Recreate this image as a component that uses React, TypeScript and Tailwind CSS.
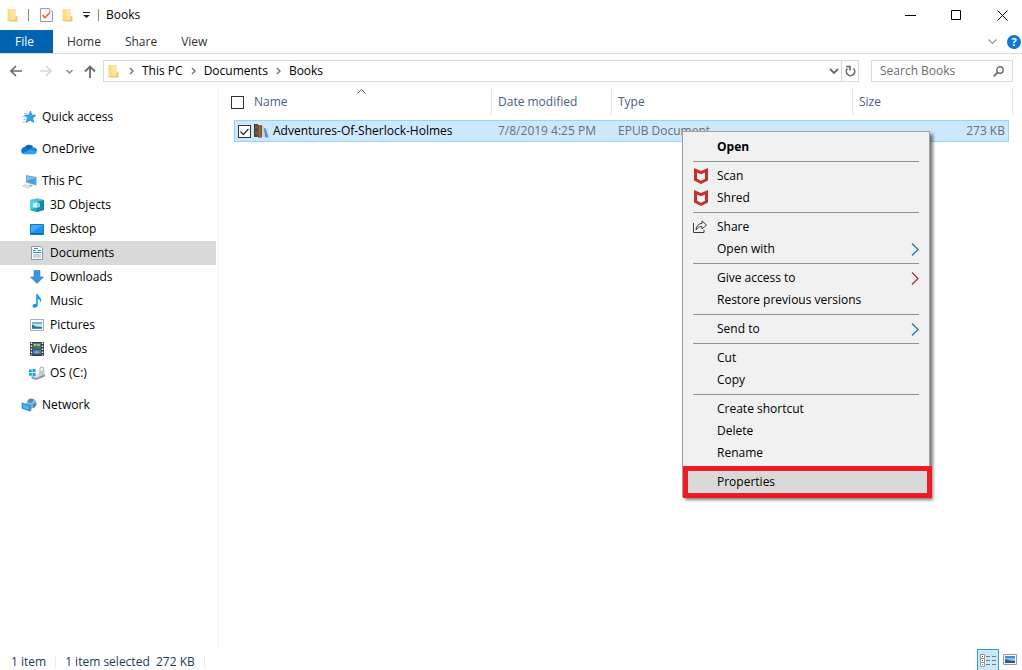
import type { ReactNode } from "react";

interface NavItem {
  label: string;
  icon: ReactNode;
  child?: boolean;
  active?: boolean;
}

interface MenuItem {
  label: string;
  icon?: ReactNode;
  bold?: boolean;
  submenu?: boolean;
  marked?: boolean;
}

/* ---------- icons ---------- */

function FolderIcon() {
  return (
    <svg width="11" height="14" viewBox="0 0 11 14" className="shrink-0">
      <path d="M6 8h4.500v5.500H3z" fill="#f3cd6b" />
      <path d="M.5 1h8v8.500L7 13H.5z" fill="#f9dc85" />
      <path d="M2.500 1h6v8.500L7 13H5z" fill="#fce49a" />
      <path d="M.5 12.200h10v1H.5z" fill="#f0c860" />
    </svg>
  );
}

function PropertiesIcon() {
  return (
    <svg width="13" height="16" viewBox="0 0 13 16">
      <path d="M.5 1.500h9l3 3v10H.5z" fill="#f4f7fa" stroke="#9aa0a6" />
      <path d="M9.500 1.500v3h3" fill="#fff" stroke="#b4b9be" />
      <path d="M2.500 8l2.500 2.500L10 5.500" fill="none" stroke="#ee6a35" strokeWidth="1.700" />
    </svg>
  );
}

function Chevron({ d, w, h, color, stroke = 1 }: { d: string; w: number; h: number; color: string; stroke?: number }) {
  return (
    <svg width={w} height={h} viewBox={`0 0 ${w} ${h}`} className="shrink-0">
      <path d={d} fill="none" stroke={color} strokeWidth={stroke} />
    </svg>
  );
}

const CrumbArrow = () => <Chevron d="M1 1l3 3-3 3" w={5} h={8} color="#7a7a7a" stroke={1.5} />;

function StarIcon() {
  return (
    <svg width="16" height="16" viewBox="0 0 16 16">
      <path d="M9.500 2l1.300 4 4.200.3-3.400 2.900 1.300 4.300-3.900-2.300-4 2.300 1.500-4.400L3.500 6.300l4.400-.3z" fill="#33a3ea" stroke="#1c7fc8" strokeWidth=".6" />
      <path d="M3 4.500h3.500M1.500 7.500h4M2.500 10.500h3M1.500 13h3" stroke="#8ecbf2" strokeWidth="1" />
    </svg>
  );
}

function OneDriveIcon() {
  return (
    <svg width="16" height="16" viewBox="0 0 16 16">
      <path d="M3.500 6.500a5 4.500 0 0 1 8.600-.8l-3 4.300L2 12z" fill="#0f5fb5" />
      <path d="M.2 10a3.500 3.500 0 0 1 4.600-3.700l4.700 2.700L2.500 13A3 3 0 0 1 .2 10z" fill="#1474cc" />
      <path d="M8 9.200a4.300 4.300 0 0 1 5-2.700 3.300 3.300 0 0 1 2.900 3.700l-3 1.500z" fill="#1987dc" />
      <path d="M1.500 12.500L9.200 8.600l6.600 2A2.700 2.700 0 0 1 13.300 13.300H3.500a3 3 0 0 1-2-.8z" fill="#2aa4ec" />
    </svg>
  );
}

function ThisPcIcon() {
  return (
    <svg width="16" height="16" viewBox="0 0 16 16">
      <path d="M5 2l10.500 2v8.500L5 9.500z" fill="#8a9aa8" />
      <path d="M6 3.200l8.500 1.700v6.300L6 8.700z" fill="#3ba4ec" />
      <path d="M6 3.200l8.500 1.700L6 7.500z" fill="#7cc8f5" />
      <path d="M.5 13l4-1.800 6.500 2-4 2.300z" fill="#c5ccd1" />
      <path d="M2.500 13.100l2.200-1 4.300 1.300-2.200 1.200z" fill="#e8ebed" />
      <path d="M9 11.500l3 .8-1.200.9-3-1z" fill="#9fa9b1" />
    </svg>
  );
}

function CubeIcon() {
  return (
    <svg width="16" height="16" viewBox="0 0 16 16">
      <path d="M1 3l7-1.500L15 3v10l-7 2-7-2z" fill="#35b7cf" />
      <path d="M1 3l7-1.500L15 3 8 5z" fill="#4cc3d3" />
      <path d="M1 3l7 2v5l-7 3z" fill="#5fd0dc" />
      <path d="M8 5l7-2v10l-7 2z" fill="#1789a6" />
      <path d="M4 6.500L8 5v6l-4-1z" fill="#c8f4f6" />
      <path d="M8 5l3 1.200V10l-3 1z" fill="#7edbe4" />
      <path d="M1 13l7-2.500V15z" fill="#2ba5bd" />
    </svg>
  );
}

function DesktopIcon() {
  return (
    <svg width="16" height="16" viewBox="0 0 16 16">
      <path d="M1.500 3.500h13v10h-13z" fill="#1493f5" stroke="#1778c8" />
      <path d="M2 4h12L2 12z" fill="#3cabfb" />
      <path d="M2 12h12v1H2z" fill="#0b64b0" />
    </svg>
  );
}

function DocumentIcon() {
  return (
    <svg width="16" height="16" viewBox="0 0 16 16">
      <path d="M2.500 1.500h9l2 2v11h-11z" fill="#fbfcfd" stroke="#8e979e" />
      <path d="M5 3.500h4M4 5.500h3M8.500 5.500H12M4 7.500h8" stroke="#2b9cdb" strokeWidth="1.200" />
      <path d="M4 10h8M4 12h8" stroke="#a3abb2" />
    </svg>
  );
}

function DownloadIcon() {
  return (
    <svg width="16" height="16" viewBox="0 0 16 16">
      <path d="M5 1.500h6V8h3.500L8 14.500 1.500 8H5z" fill="#3793e0" stroke="#2b7fca" strokeWidth=".6" />
    </svg>
  );
}

function MusicIcon() {
  return (
    <svg width="16" height="16" viewBox="0 0 16 16">
      <path d="M7.200 1h1.600c.3 2.500 3.600 3.300 3.400 6.300-.1 1-.4 1.700-.9 2.500.3-2.200-.8-3.200-2.500-3.800V12c0 1.700-1.600 2.700-3.200 2.700-1.200 0-2.100-.6-2.100-1.600 0-1.500 1.900-2.600 3.700-2.300z" fill="#0f9bf5" />
    </svg>
  );
}

function PictureIcon() {
  return (
    <svg width="16" height="16" viewBox="0 0 16 16">
      <path d="M1.500 2.500h13v11h-13z" fill="#fff" stroke="#a9aeb3" />
      <path d="M3 5h10v7H3z" fill="#c3e2f8" />
      <path d="M3 5h10v2H3z" fill="#6fb4ee" />
      <path d="M3 7.500l4 2 6 .5v1H3z" fill="#2f6f7c" />
      <path d="M3 10.800h10V12H3z" fill="#4a8fc9" />
    </svg>
  );
}

function VideoIcon() {
  return (
    <svg width="16" height="16" viewBox="0 0 16 16">
      <path d="M1 1h14v14H1z" fill="#3b3b3b" />
      <path d="M2.500 1.500v13M13.500 1.500v13" stroke="#fff" strokeWidth="1.400" strokeDasharray="1.500 1.500" />
      <path d="M4 2h8v5.500H4zM4 8.500h8V14H4z" fill="#2f7de0" />
      <path d="M4 6l3-1.500L9 6l3-2v3.500H4z" fill="#2c8a3d" />
      <path d="M8 3h3v2H8z" fill="#f0a428" />
      <path d="M5 3h2v1.500H5z" fill="#e8d742" />
      <path d="M5 11l3-1 3 1-3 1.500z" fill="#f0a428" />
      <path d="M4 13h8v1H4z" fill="#1e4f9c" />
    </svg>
  );
}

function DriveIcon() {
  return (
    <svg width="16" height="16" viewBox="0 0 16 16">
      <path d="M2.500 11.500L12 8.500l4 .5v2.500L7 15l-4.500-1.500z" fill="#8f969c" />
      <path d="M2.500 11.500L12 8.500l4 .5-9 4z" fill="#dfe3e6" />
      <path d="M11 6V3.500a1.800 1.800 0 0 1 3.500 0V6" fill="none" stroke="#b3bac0" strokeWidth="1.200" />
      <path d="M10 5.500h5.500V10l-5.500.5z" fill="#c3cad0" />
      <path d="M0 4.500h2.800v2.800H0zM3.500 4h3v3.300h-3zM0 8h2.800v2.800H0zM3.500 8h3v3.300h-3z" fill="#12a4ea" />
      <path d="M4 13l2 .7" stroke="#3fd45b" />
    </svg>
  );
}

function NetworkIcon() {
  return (
    <svg width="16" height="16" viewBox="0 0 16 16">
      <circle cx="10.500" cy="6.500" r="5" fill="#86b3d3" />
      <path d="M7 3c2-2 4.500-1.500 5.500-.5l-1.500 3-3 .5zM12 7l3.500-1c0 2.500-1 4-3.500 5z" fill="#4b87b4" />
      <path d="M.7 5.500L9 8v6.500L.7 11.500z" fill="#1e86d0" />
      <path d="M1.700 6.900L8 8.800v4.300L1.700 10.800z" fill="#4db4f2" />
      <path d="M9 8l1.500-.7v6L9 14.500z" fill="#7795ac" />
    </svg>
  );
}

function BooksIcon() {
  return (
    <svg width="15" height="15" viewBox="0 0 15 15" className="shrink-0">
      <path d="M0 0h4v13H0z" fill="#6a4a2b" />
      <path d="M0 0h1v13H0z" fill="#3d3a30" />
      <path d="M4 1h4v12.500H4z" fill="#5b5348" />
      <path d="M5 1h1.500v12.500H5z" fill="#a5743d" />
      <path d="M9.500 4.500l2-.5L14.500 13l-3 .7z" fill="#5b86ea" />
      <path d="M8 1.500l1.500-.3 1.500 12H9z" fill="#d8c9a5" />
      <path d="M1 3h2.500M1 9h2.500" stroke="#a3733f" />
    </svg>
  );
}

function ShieldIcon() {
  return (
    <svg width="16" height="16" viewBox="0 0 16 16">
      <path d="M1 0l7 3 7-3v12.500L8 16l-7-3.500zM4 4.500v6.300l4 2 4-2V4.500L8 6.300z" fill="#c5302f" fillRule="evenodd" />
    </svg>
  );
}

function ShareIcon() {
  return (
    <svg width="15" height="14" viewBox="0 0 15 14">
      <path d="M.5 3v9.500h10.500V10" fill="none" stroke="#3a3a3a" />
      <path d="M9 1l4.500 4L9 9V6.500C6.500 6.500 4.500 7.500 3 10c.3-4 2.500-6.300 6-6.600z" fill="none" stroke="#3a3a3a" strokeLinejoin="round" />
    </svg>
  );
}

/* ---------- data ---------- */

const navGroups: NavItem[][] = [
  [{ label: "Quick access", icon: <StarIcon /> }],
  [{ label: "OneDrive", icon: <OneDriveIcon /> }],
  [
    { label: "This PC", icon: <ThisPcIcon /> },
    { label: "3D Objects", icon: <CubeIcon />, child: true },
    { label: "Desktop", icon: <DesktopIcon />, child: true },
    { label: "Documents", icon: <DocumentIcon />, child: true, active: true },
    { label: "Downloads", icon: <DownloadIcon />, child: true },
    { label: "Music", icon: <MusicIcon />, child: true },
    { label: "Pictures", icon: <PictureIcon />, child: true },
    { label: "Videos", icon: <VideoIcon />, child: true },
    { label: "OS (C:)", icon: <DriveIcon />, child: true },
  ],
  [{ label: "Network", icon: <NetworkIcon /> }],
];

const menuGroups: MenuItem[][] = [
  [{ label: "Open", bold: true }],
  [
    { label: "Scan", icon: <ShieldIcon /> },
    { label: "Shred", icon: <ShieldIcon /> },
  ],
  [
    { label: "Share", icon: <ShareIcon /> },
    { label: "Open with", submenu: true },
  ],
  [{ label: "Give access to", submenu: true }, { label: "Restore previous versions" }],
  [{ label: "Send to", submenu: true }],
  [{ label: "Cut" }, { label: "Copy" }],
  [{ label: "Create shortcut" }, { label: "Delete" }, { label: "Rename" }],
  [{ label: "Properties", marked: true }],
];

/* ---------- window parts ---------- */

function TitleBar() {
  return (
    <header className="flex h-[30px] shrink-0 items-center pl-[7px]">
      <FolderIcon />
      <span className="ml-[10px] h-3 w-px bg-[#8a8a8a]" />
      <button aria-label="Properties" className="ml-[11px]">
        <PropertiesIcon />
      </button>
      <button aria-label="New folder" className="ml-[9px]">
        <FolderIcon />
      </button>
      <button aria-label="Customize toolbar" className="ml-[10px]">
        <svg width="7" height="6" viewBox="0 0 7 6">
          <path d="M0 0h7v1H0zM0 3h7L3.500 6z" fill="#222" />
        </svg>
      </button>
      <span className="ml-2 h-3 w-px bg-[#8a8a8a]" />
      <h1 className="ml-[7px] flex-1">Books</h1>
      <div className="flex gap-[6px]">
        <button aria-label="Minimize" className="flex h-7 w-10 items-center justify-center">
          <Chevron d="M0 5.500h11" w={11} h={11} color="#000" />
        </button>
        <button aria-label="Maximize" className="flex h-7 w-10 items-center justify-center">
          <Chevron d="M.5.5h9v9h-9z" w={10} h={10} color="#000" />
        </button>
        <button aria-label="Close" className="flex h-7 w-10 items-center justify-center">
          <Chevron d="M.5.5l10 10M10.500.5l-10 10" w={11} h={11} color="#000" />
        </button>
      </div>
    </header>
  );
}

function Ribbon() {
  return (
    <div className="flex h-6 shrink-0 items-center border-b border-[#dadbdc] pr-px text-[#333]">
      <button className="h-full w-[53px] bg-[#0063b1] pr-1 text-white">File</button>
      <div className="ml-[14px] flex gap-6">
        <button>Home</button>
        <button>Share</button>
        <button>View</button>
      </div>
      <div className="ml-auto flex items-center gap-[10px]">
        <button aria-label="Expand ribbon">
          <Chevron d="M.5.5l4 4 4-4" w={9} h={6} color="#999" stroke={1.2} />
        </button>
        <button aria-label="Help" className="flex size-[14px] items-center justify-center rounded-full bg-[#0f78d4] text-[11px] font-bold text-white">
          ?
        </button>
      </div>
    </div>
  );
}

function AddressRow() {
  return (
    <div className="flex h-[34px] shrink-0 items-center pr-[9px] pl-[10px]">
      <button aria-label="Back">
        <Chevron d="M6 1L1 6l5 5M1 6h11" w={12} h={12} color="#6a6a6a" stroke={1.6} />
      </button>
      <button aria-label="Forward" className="ml-[18px]">
        <Chevron d="M6 1L11 6l-5 5M11 6H0" w={12} h={12} color="#d6d6d6" stroke={1.6} />
      </button>
      <button aria-label="Recent locations" className="ml-[14px]">
        <Chevron d="M.5 1l3 3 3-3" w={7} h={5} color="#8a8a8a" stroke={1.4} />
      </button>
      <button aria-label="Up" className="ml-[11px]">
        <Chevron d="M1 6.500L6 1.500l5 5M6 1.500V13" w={12} h={13} color="#6a6a6a" stroke={1.8} />
      </button>
      <nav aria-label="Address" className="ml-[7px] flex h-[22px] flex-1 items-center border border-[#d9d9d9] pl-1">
        <FolderIcon />
        <div className="ml-[10px] flex items-center gap-2">
          <CrumbArrow />
          <button>This PC</button>
          <CrumbArrow />
          <button>Documents</button>
          <CrumbArrow />
          <button>Books</button>
        </div>
        <button aria-label="Previous locations" className="mr-[2px] ml-auto">
          <Chevron d="M1 1l4 4 4-4" w={10} h={7} color="#6a6a6a" stroke={1.8} />
        </button>
        <button aria-label="Refresh" className="flex h-full w-[17px] items-center justify-center border-l border-[#d9d9d9]">
          <svg width="11" height="12" viewBox="0 0 11 12">
            <path d="M2.500 3.500A4.200 4.200 0 1 0 8.500 3.500" fill="none" stroke="#6a6a6a" strokeWidth="1.600" />
            <path d="M1 1.500H5V5.500" fill="none" stroke="#6a6a6a" strokeWidth="1.600" />
          </svg>
        </button>
      </nav>
      <div className="ml-3 flex h-[22px] w-[142px] items-center border border-[#d9d9d9] px-2">
        <input aria-label="Search Books" placeholder="Search Books" className="w-full min-w-0 flex-1 outline-none placeholder:text-[#6d6d6d]" />
        <svg width="11" height="11" viewBox="0 0 11 11" className="shrink-0">
          <circle cx="7" cy="4" r="3.200" fill="none" stroke="#6a6a6a" strokeWidth="1.400" />
          <path d="M4.700 6.300L.7 10.300" stroke="#6a6a6a" strokeWidth="1.800" />
        </svg>
      </div>
    </div>
  );
}

function Sidebar() {
  return (
    <nav aria-label="Folders" className="flex w-[219px] shrink-0 flex-col gap-2 border-r border-[#f2f2f2] pt-[17px]">
      {navGroups.map((group) => (
        <ul key={group[0].label}>
          {group.map((item) => (
            <li key={item.label} className="pr-[2px]">
              <a
                href="#"
                className={`flex h-6 items-center gap-[5px] ${item.child ? "pl-[29px]" : "pl-[21px]"} ${item.active ? "bg-[#d9d9d9]" : ""}`}
              >
                {item.icon}
                {item.label}
              </a>
            </li>
          ))}
        </ul>
      ))}
    </nav>
  );
}

function CheckBox({ label, checked = false }: { label: string; checked?: boolean }) {
  return (
    <span className="relative flex size-[13px] shrink-0">
      <input type="checkbox" aria-label={label} defaultChecked={checked} className="peer size-[13px] appearance-none border border-[#333] bg-white" />
      <svg viewBox="0 0 13 13" className="pointer-events-none absolute inset-0 hidden peer-checked:block">
        <path d="M2.500 6.500l2.800 3L10.500 4" fill="none" stroke="#333" strokeWidth="1.300" />
      </svg>
    </span>
  );
}

function FileList() {
  const head = "flex h-[26px] items-center border-r border-[#e5e5e5]";
  const cell = "h-[22px] border-y border-[#99d1ff] bg-[#cce8ff] p-0 pl-[6px]";

  return (
    <main className="min-w-0 flex-1 pt-px pr-[9px] pl-3">
      <table className="w-full table-fixed border-separate border-spacing-0 text-left">
        <colgroup>
          <col className="w-[3px]" />
          <col className="w-[258px]" />
          <col className="w-[120px]" />
          <col className="w-[241px]" />
          <col />
          <col className="w-[4px]" />
        </colgroup>
        <thead className="text-[#4c607a]">
          <tr className="h-[31px] align-top">
            <th colSpan={2} className="relative p-0 font-normal">
              <div className={`${head} gap-[10px]`}>
                <CheckBox label="Select all" />
                Name
              </div>
              <span className="absolute top-0 left-[126px]">
                <Chevron d="M.5 4.500l4-4 4 4" w={9} h={5} color="#555" />
              </span>
            </th>
            <th className="p-0 font-normal">
              <div className={`${head} pl-[6px]`}>Date modified</div>
            </th>
            <th className="p-0 font-normal">
              <div className={`${head} pl-[6px]`}>Type</div>
            </th>
            <th colSpan={2} className="p-0 font-normal">
              <div className={`${head} pl-[6px]`}>Size</div>
            </th>
          </tr>
        </thead>
        <tbody className="text-[#6d6d6d]">
          <tr>
            <td className="p-0" />
            <td className="h-[22px] border-y border-l border-[#99d1ff] bg-[#cce8ff] p-0 pl-[3px] text-black">
              <div className="flex items-center">
                <CheckBox label="Select Adventures-Of-Sherlock-Holmes" checked />
                <span className="mr-1 ml-[3px]">
                  <BooksIcon />
                </span>
                <span className="whitespace-nowrap">Adventures-Of-Sherlock-Holmes</span>
              </div>
            </td>
            <td className={cell}>7/8/2019 4:25 PM</td>
            <td className={cell}>EPUB Document</td>
            <td className="h-[22px] border-y border-r border-[#99d1ff] bg-[#cce8ff] p-0 pr-[3px] text-right">273 KB</td>
            <td className="p-0" />
          </tr>
        </tbody>
      </table>
    </main>
  );
}

function ContextMenu() {
  return (
    <div
      role="menu"
      className="absolute top-[131px] left-[682px] w-[248px] border border-[#a0a0a0] bg-[#f1f1f1] pt-1 pb-[3px] shadow-[3px_3px_3px_rgba(0,0,0,0.5)]"
    >
      {menuGroups.map((group, i) => (
        <div key={group[0].label}>
          {i > 0 && <hr className="mx-[10px] my-[3px] border-[#919191]" />}
          {group.map((item) =>
            item.marked ? (
              <div key={item.label} className="pr-[2px] pl-[5px]">
                <button role="menuitem" className="block h-[22px] w-full bg-[#d9d9d9] pl-[29px] text-left outline-5 outline-[#ed1c24]">
                  {item.label}
                </button>
              </div>
            ) : (
              <button
                key={item.label}
                role="menuitem"
                className={`flex h-[22px] w-full items-center pr-[10px] text-left ${item.bold ? "font-bold" : ""}`}
              >
                <span className="flex w-[34px] shrink-0 pl-[10px]">{item.icon}</span>
                <span className="flex-1">{item.label}</span>
                {item.submenu && (
                  <Chevron d="M1 .5l6 6-6 6" w={8} h={13} color={item.label === "Give access to" ? "#9b2f3a" : "#1f6fa8"} stroke={1.2} />
                )}
              </button>
            ),
          )}
        </div>
      ))}
    </div>
  );
}

function StatusBar() {
  return (
    <footer className="flex h-[21px] shrink-0 items-end pr-[5px] pl-[11px] text-[#1e395b]">
      <div className="flex items-center gap-[9px]">
        <span>1 item</span>
        <span className="h-3 w-px bg-[#ececec]" />
        <span className="whitespace-pre">1 item selected  272 KB</span>
        <span className="h-3 w-px bg-[#ececec]" />
      </div>
      <div className="ml-auto flex h-full items-center gap-1">
        <button aria-label="Details view" className="flex h-full w-[22px] items-center justify-center border border-b-0 border-[#26a0da] bg-[#cbe8f6]">
          <svg width="16" height="13" viewBox="0 0 16 13">
            <path d="M.5.5h4v12h-4zM.5 4.500h4M.5 8.500h4" fill="#fff" stroke="#999" />
            <path d="M2 2h1v1H2zM2 6h1v1H2zM2 10h1v1H2z" fill="#a04848" />
            <path d="M6 2.500h4M12 2.500h4M6 6.500h4M12 6.500h4M6 10.500h4M12 10.500h4" stroke="#6d7a85" />
          </svg>
        </button>
        <button aria-label="Large icons view">
          <svg width="14" height="11" viewBox="0 0 14 11">
            <path d="M.5.5h13v10H.5z" fill="#fff" stroke="#999" />
            <path d="M2 2h10v7H2z" fill="#8cc0f0" />
            <path d="M2 2h10v2H2z" fill="#4a86d8" />
            <path d="M2 5l5 1.500 5 .5v2H2z" fill="#2c5f6f" />
          </svg>
        </button>
      </div>
    </footer>
  );
}

export default function App() {
  return (
    <div className="relative flex h-screen flex-col overflow-hidden bg-white font-['Open_Sans','Noto_Sans',sans-serif] text-[12px] leading-4 text-black">
      <TitleBar />
      <Ribbon />
      <AddressRow />
      <div className="flex min-h-0 flex-1">
        <Sidebar />
        <FileList />
      </div>
      <StatusBar />
      <ContextMenu />
    </div>
  );
}
